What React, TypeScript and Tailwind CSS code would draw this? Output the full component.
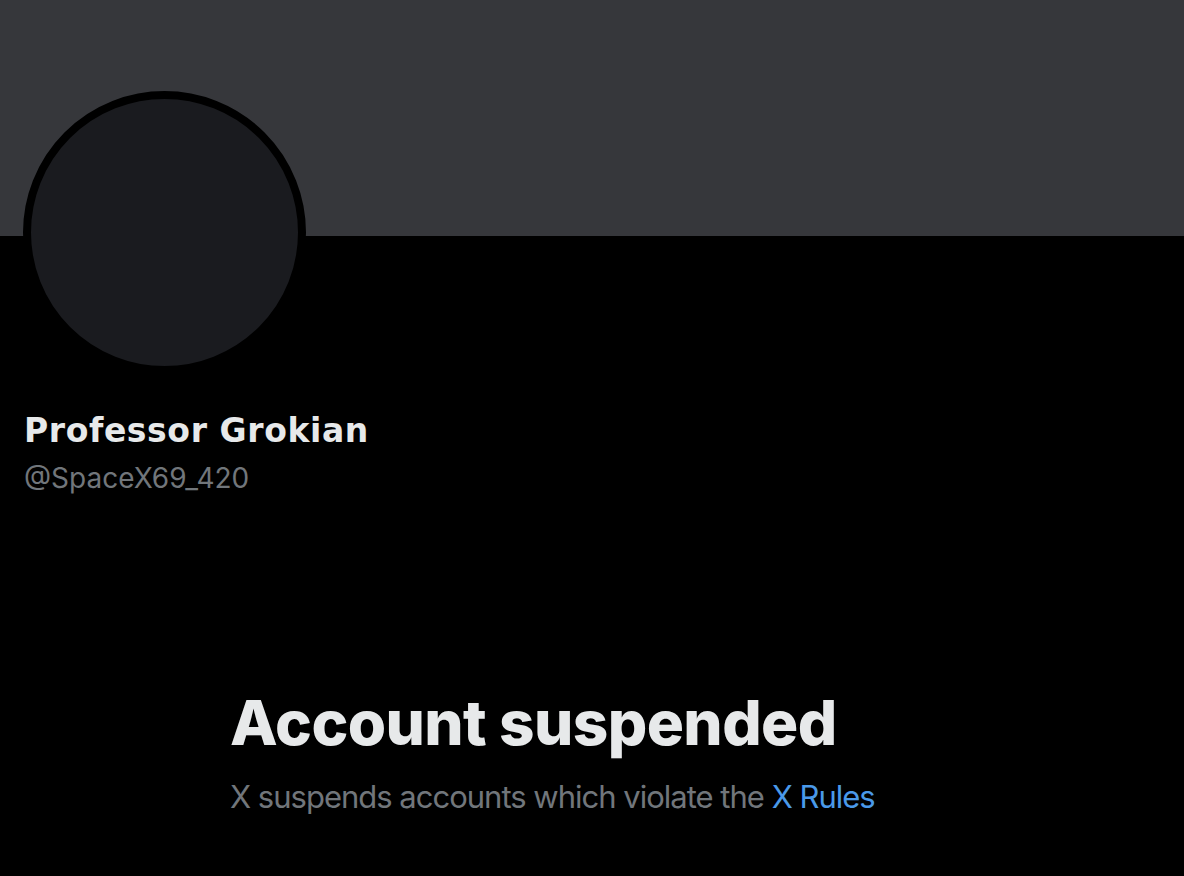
export default function App() {
  return (
    <div
      className="w-[1184px] h-[876px] overflow-hidden bg-black flex flex-col"
      style={{ fontFamily: "Inter, 'Liberation Sans', sans-serif" }}
    >
      {/* banner */}
      <div className="h-[236px] shrink-0 bg-[#36373b]" />

      {/* avatar */}
      <div className="-mt-[145px] ml-[23px] w-[283px] h-[283px] rounded-full border-[8px] border-black bg-[#1a1b1f]" />

      {/* name + handle */}
      <div className="mt-[38px] ml-[24px] flex flex-col">
        <h1 className="font-['DejaVu_Sans',sans-serif] text-[33px] leading-[38px] font-bold text-[#e7e9ea] tracking-[0.6px]">
          Professor Grokian
        </h1>
        <p className="mt-[9px] text-[28px] leading-[38px] text-[#71767b]">@SpaceX69_420</p>
      </div>

      {/* suspended message */}
      <div className="mt-[190px] ml-[230px] flex flex-col">
        <h2 className="text-[62px] leading-[72px] font-extrabold text-[#e7e9ea] tracking-[-0.6px]">
          Account suspended
        </h2>
        <p className="mt-[18px] text-[31px] leading-[40px] text-[#71767b] tracking-[-1px]">
          X suspends accounts which violate the{" "}
          <a className="text-[#4a99e9]">X Rules</a>
        </p>
      </div>
    </div>
  );
}
